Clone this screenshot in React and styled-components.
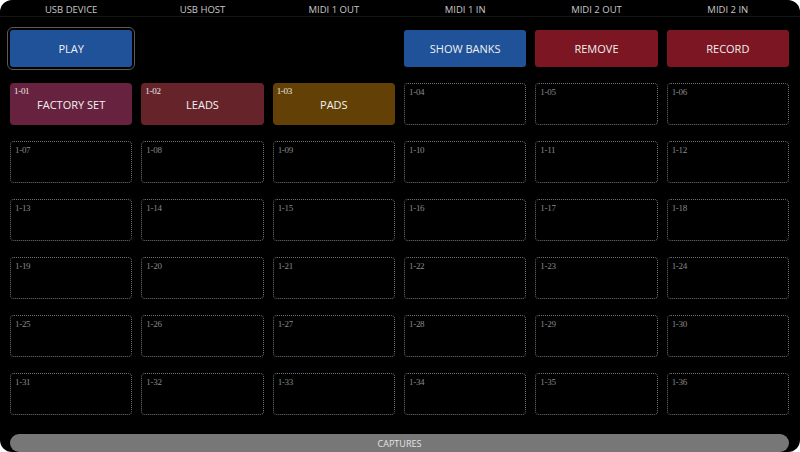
import React from 'react'
import styled, { createGlobalStyle } from "styled-components";

const GlobalStyle = createGlobalStyle`
  html, body {
    margin: 0;
    padding: 0;
    background: #ffffff;
  }
`

const Frame = styled.div`
  width: 800px;
  height: 452px;
  background: #000;
  border-radius: 12px;
  display: flex;
  flex-direction: column;
  overflow: hidden;
  font-family: "Open Sans", "Noto Sans", sans-serif;
`

const Columns = styled.div`
  display: grid;
  grid-template-columns: repeat(6, 1fr);
  column-gap: 9px;
  padding: 0 11px 0 10px;
`

const Header = styled(Columns)`
  height: 17px;
  border-bottom: 1px solid #141414;
  align-items: center;
  box-sizing: border-box;
`

const PortLabel = styled.div`
  color: #c8c8c8;
  font-size: 9.5px;
  text-align: center;
  line-height: 17px;
  padding-top: 1px;
`

const Toolbar = styled(Columns)`
  margin-top: 13px;
  height: 37px;
`

const ToolButton = styled.div`
  display: flex;
  align-items: center;
  justify-content: center;
  background: ${(props) => (props.tone === "red" ? "#7b1622" : "#1f5299")};
  color: #f0f0f0;
  font-size: 11px;
  border-radius: 3px;
  outline: ${(props) => (props.selected ? "1px solid #5a5a5a" : "none")};
  outline-offset: 2px;
`

const Bank = styled(Columns)`
  margin-top: 16px;
  grid-template-rows: repeat(6, 42px);
  row-gap: 16px;
`

const Slot = styled.div`
  position: relative;
  display: flex;
  align-items: center;
  justify-content: center;
  border-radius: 4px;
  background: ${(props) => props.color || "transparent"};
  border: ${(props) => (props.color ? "none" : "1px dotted #707070")};
  box-sizing: border-box;
  color: #f2f2f2;
  font-size: 11px;
`

const SlotNumber = styled.span`
  position: absolute;
  top: 3px;
  left: 4px;
  font-family: "Liberation Serif", serif;
  font-size: 9px;
  color: ${(props) => (props.filled ? "#e6e6e6" : "#8a8a8a")};
  letter-spacing: -0.3px;
`

const SlotName = styled.span`
  margin-top: 1px;
`

const Footer = styled.div`
  margin: auto 11px 0 10px;
  height: 18px;
  background: #777;
  border-radius: 9px;
  color: #e4e4e4;
  font-size: 9px;
  display: flex;
  align-items: center;
  justify-content: center;
`

const ports = ["USB DEVICE", "USB HOST", "MIDI 1 OUT", "MIDI 1 IN", "MIDI 2 OUT", "MIDI 2 IN"];

const presets = {
  1: { name: "FACTORY SET", color: "#67223f" },
  2: { name: "LEADS", color: "#66242a" },
  3: { name: "PADS", color: "#634106" },
};

const slots = Array.from({ length: 36 }, (_, i) => i + 1);

export default function App() {
  return (
    <>
      <GlobalStyle />
      <Frame>
        <Header>
          {ports.map((p) => (
            <PortLabel key={p}>{p}</PortLabel>
          ))}
        </Header>
        <Toolbar>
          <ToolButton selected>PLAY</ToolButton>
          <div />
          <div />
          <ToolButton>SHOW BANKS</ToolButton>
          <ToolButton tone="red">REMOVE</ToolButton>
          <ToolButton tone="red">RECORD</ToolButton>
        </Toolbar>
        <Bank>
          {slots.map((n) => {
            const preset = presets[n];
            return (
              <Slot key={n} color={preset && preset.color}>
                <SlotNumber filled={!!preset}>1-{String(n).padStart(2, "0")}</SlotNumber>
                {preset && <SlotName>{preset.name}</SlotName>}
              </Slot>
            );
          })}
        </Bank>
        <Footer>CAPTURES</Footer>
      </Frame>
    </>
  )
}
